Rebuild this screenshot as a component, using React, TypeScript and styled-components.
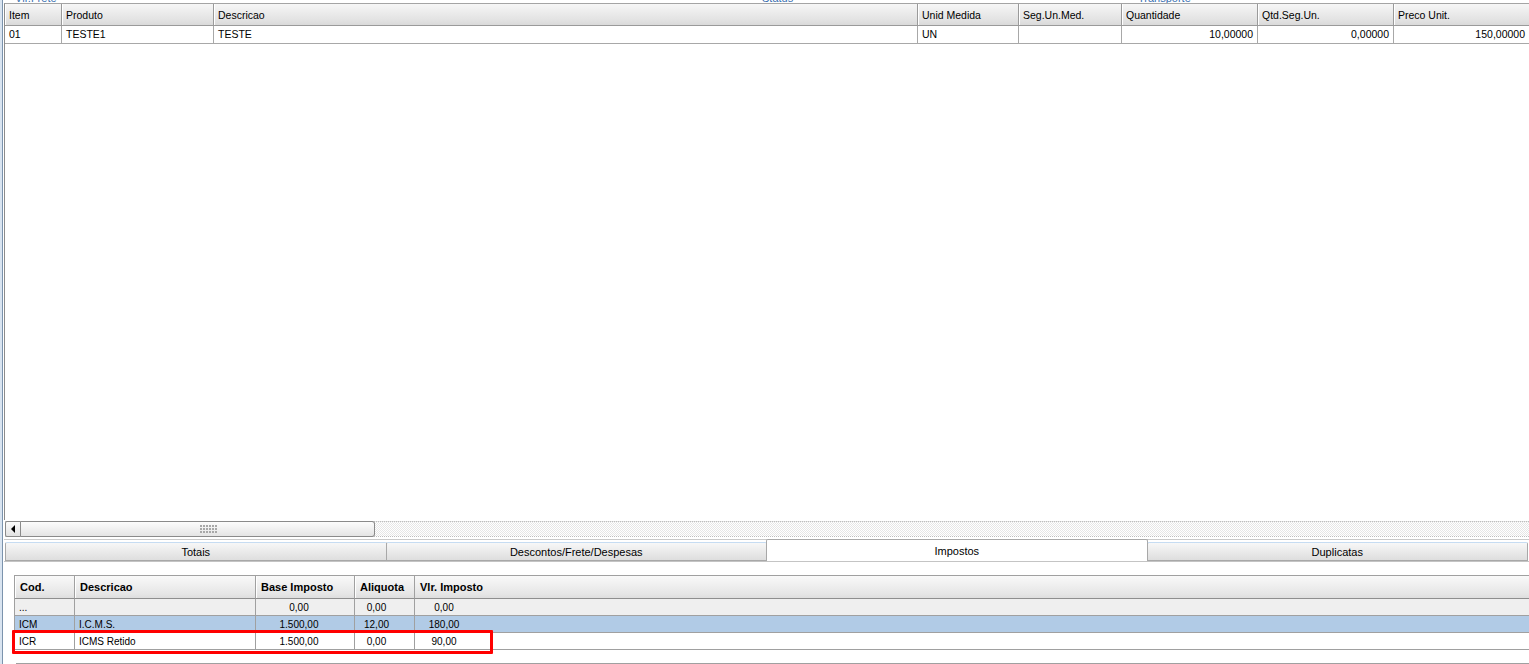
import React from "react";
import styled, { createGlobalStyle } from "styled-components";

const GlobalStyle = createGlobalStyle`
  html, body {
    margin: 0;
    padding: 0;
    background: #fff;
  }
  body {
    width: 1529px;
    height: 664px;
    overflow: hidden;
    font-family: "Liberation Sans", Arial, sans-serif;
    color: #000;
  }
`;

type Col = { title: string; width: number; align?: "left" | "right" };

const itemCols: Col[] = [
  { title: "Item", width: 57 },
  { title: "Produto", width: 152 },
  { title: "Descricao", width: 704 },
  { title: "Unid Medida", width: 101 },
  { title: "Seg.Un.Med.", width: 103 },
  { title: "Quantidade", width: 136, align: "right" },
  { title: "Qtd.Seg.Un.", width: 136, align: "right" },
  { title: "Preco Unit.", width: 136, align: "right" },
];

const itemRows = [["01", "TESTE1", "TESTE", "UN", "", "10,00000", "0,00000", "150,00000"]];

type TaxCol = { title: string; width: string; pad?: number; center?: boolean; divider: boolean };

const taxCols: TaxCol[] = [
  { title: "Cod.", width: "60px", divider: true },
  { title: "Descricao", width: "181px", divider: true },
  { title: "Base Imposto", width: "99px", center: true, pad: 16, divider: true },
  { title: "Aliquota", width: "60px", center: true, pad: 20, divider: true },
  { title: "Vlr. Imposto", width: "86px", center: true, pad: 32, divider: false },
  { title: "", width: "1fr", divider: false },
];

const taxRows = [
  { kind: "empty", cells: ["...", "", "0,00", "0,00", "0,00", ""] },
  { kind: "selected", cells: ["ICM", "I.C.M.S.", "1.500,00", "12,00", "180,00", ""] },
  { kind: "plain", cells: ["ICR", "ICMS Retido", "1.500,00", "0,00", "90,00", ""] },
];

const tabs = ["Totais", "Descontos/Frete/Despesas", "Impostos", "Duplicatas"];

export default function App() {
  const itemTemplate = itemCols.map((c) => `${c.width}px`).join(" ");
  const taxTemplate = taxCols.map((c) => c.width).join(" ");

  return (
    <>
      <GlobalStyle />
      <Frame>
        <Inner>
          <CaptionStrip>
            <Caption>Vlr.Frete</Caption>
            <Caption>Status</Caption>
            <Caption>Transporte</Caption>
          </CaptionStrip>

          <ItemGrid>
            <GridRow $template={itemTemplate}>
              {itemCols.map((c) => (
                <HeadCell key={c.title}>{c.title}</HeadCell>
              ))}
            </GridRow>
            {itemRows.map((r, i) => (
              <GridRow key={i} $template={itemTemplate}>
                {r.map((v, j) => (
                  <ItemCell key={j} $align={itemCols[j].align || "left"}>
                    {v}
                  </ItemCell>
                ))}
              </GridRow>
            ))}
          </ItemGrid>

          <HScroll>
            <ArrowButton>
              <ArrowLeft />
            </ArrowButton>
            <Thumb>
              <Grip />
            </Thumb>
          </HScroll>

          <TabArea>
            <TabStrip>
              {tabs.map((t) => (
                <Tab key={t} $active={t === "Impostos"}>
                  {t}
                </Tab>
              ))}
            </TabStrip>
          </TabArea>

          <TaxPanel>
            <TaxGrid>
              <GridRow $template={taxTemplate}>
                {taxCols.map((c, i) => (
                  <TaxHead key={i} $divider={c.divider}>
                    {c.title}
                  </TaxHead>
                ))}
              </GridRow>
              {taxRows.map((r, i) => (
                <GridRow key={i} $template={taxTemplate}>
                  {r.cells.map((v, j) => (
                    <TaxCell
                      key={j}
                      $kind={r.kind}
                      $center={!!taxCols[j].center}
                      $pad={taxCols[j].pad || 0}
                      $divider={taxCols[j].divider}
                    >
                      {v}
                    </TaxCell>
                  ))}
                </GridRow>
              ))}
              <Highlight />
            </TaxGrid>
            <BottomScrollEdge />
          </TaxPanel>
        </Inner>
      </Frame>
    </>
  );
}

const Frame = styled.div`
  height: 664px;
  border-left: 2px solid #d9e4f0;
  box-sizing: border-box;
`;

const Inner = styled.div`
  height: 100%;
  border-left: 1px solid #7b93ad;
  padding-left: 1px;
  display: flex;
  flex-direction: column;
`;

const CaptionStrip = styled.div`
  height: 3px;
  overflow: hidden;
  display: grid;
  grid-template-columns: 747px 376px 1fr;
  padding-left: 11px;
  font-size: 11px;
  color: #3a6fb0;
`;

const Caption = styled.span`
  display: block;
  line-height: 11px;
  margin-top: -7px;
`;

const ItemGrid = styled.div`
  height: 518px;
  box-sizing: border-box;
  border-top: 1px solid #a4a4a4;
  border-left: 1px solid #8c8c8c;
  background: #fff;
`;

const GridRow = styled.div<{ $template: string }>`
  display: grid;
  grid-template-columns: ${(p) => p.$template};
`;

const HeadCell = styled.div`
  height: 22px;
  box-sizing: border-box;
  padding: 0 4px;
  display: flex;
  align-items: center;
  font-size: 10.5px;
  background: linear-gradient(#f6f6f6, #e4e4e4 70%, #dadada);
  border-right: 1px solid #9a9a9a;
  border-bottom: 1px solid #9a9a9a;
  box-shadow: inset 1px 0 #ffffff;
  white-space: nowrap;
`;

const ItemCell = styled.div<{ $align: "left" | "right" }>`
  height: 18px;
  box-sizing: border-box;
  padding: 0 4px 1px;
  display: flex;
  align-items: center;
  justify-content: ${(p) => (p.$align === "right" ? "flex-end" : "flex-start")};
  font-size: 10.5px;
  border-right: 1px solid #a8a8a8;
  border-bottom: 1px solid #a8a8a8;
  white-space: nowrap;
`;

const HScroll = styled.div`
  display: flex;
  height: 16px;
  margin: 1px 0 0 1px;
  box-sizing: border-box;
  border-top: 1px dotted #bdbdbd;
  border-bottom: 1px dotted #bdbdbd;
  background: repeating-conic-gradient(#e6e6e6 0 25%, #ffffff 0 50%) 0 0 / 2px 2px;
`;

const ArrowButton = styled.div`
  width: 16px;
  margin: -1px 0;
  box-sizing: border-box;
  border: 1px solid #8a8a8a;
  border-radius: 2px 0 0 2px;
  background: linear-gradient(#fbfbfb, #e2e2e2);
  display: flex;
  align-items: center;
  justify-content: center;
`;

const ArrowLeft = styled.span`
  width: 0;
  height: 0;
  border-top: 4px solid transparent;
  border-bottom: 4px solid transparent;
  border-right: 4px solid #000;
`;

const Thumb = styled.div`
  width: 354px;
  margin: -1px 0;
  box-sizing: border-box;
  border: 1px solid #8a8a8a;
  border-left: none;
  border-radius: 0 3px 3px 0;
  background: linear-gradient(#fcfcfc, #e4e4e4);
  display: flex;
  align-items: center;
  justify-content: center;
`;

const Grip = styled.span`
  width: 17px;
  height: 8px;
  margin-left: 22px;
  background: radial-gradient(circle at 1px 1px, #a8a8a8 0.8px, transparent 1px) 0 0 / 3px 3px;
`;

const TabArea = styled.div`
  margin-top: 2px;
  border-top: 1px solid #c9c9c9;
  padding: 2px 1px 0 1px;
  border-bottom: 1px solid #c4c4c4;
`;

const TabStrip = styled.div`
  display: flex;
  align-items: flex-end;
  height: 19px;
`;

const Tab = styled.div<{ $active: boolean }>`
  flex: 1;
  height: ${(p) => (p.$active ? "22px" : "19px")};
  margin-top: ${(p) => (p.$active ? "-3px" : "0")};
  box-sizing: border-box;
  display: flex;
  align-items: center;
  justify-content: center;
  font-size: 11px;
  white-space: nowrap;
  border: 1px solid #a8a8a8;
  border-bottom: ${(p) => (p.$active ? "none" : "1px solid #a8a8a8")};
  border-top-color: ${(p) => (p.$active ? "#a8a8a8" : "#c6dcf2")};
  border-radius: 2px 2px 0 0;
  background: ${(p) => (p.$active ? "#ffffff" : "linear-gradient(#f7f7f7, #dedede)")};
  & + & {
    margin-left: -1px;
  }
`;

const TaxPanel = styled.div`
  flex: 1;
  padding: 13px 0 0 10px;
  display: flex;
  flex-direction: column;
`;

const TaxGrid = styled.div`
  position: relative;
  border-top: 1px solid #a0a0a0;
  border-left: 1px solid #a0a0a0;
`;

const TaxHead = styled.div<{ $divider: boolean }>`
  height: 23px;
  box-sizing: border-box;
  padding: 0 5px;
  display: flex;
  align-items: center;
  font-size: 11px;
  font-weight: bold;
  background: linear-gradient(#f9f9f9, #e6e6e6 80%, #dedede);
  border-right: ${(p) => (p.$divider ? "1px solid #a0a0a0" : "none")};
  border-bottom: 1px solid #8e8e8e;
  box-shadow: ${(p) => (p.$divider ? "inset 1px 0 #ffffff" : "none")};
  white-space: nowrap;
`;

const rowBg: Record<string, string> = {
  empty: "#efefef",
  selected: "#b1cbe6",
  plain: "#ffffff",
};

const TaxCell = styled.div<{ $kind: string; $center: boolean; $pad: number; $divider: boolean }>`
  height: 17px;
  box-sizing: border-box;
  padding: 0 ${(p) => (p.$center ? p.$pad : 4)}px 0 4px;
  display: flex;
  align-items: center;
  justify-content: ${(p) => (p.$center ? "center" : "flex-start")};
  font-size: 10px;
  background: ${(p) => rowBg[p.$kind]};
  border-right: ${(p) => (p.$divider ? "1px solid #a0a0a0" : "none")};
  border-bottom: 1px solid #a0a0a0;
  white-space: nowrap;
`;

const Highlight = styled.div`
  position: absolute;
  left: -3px;
  top: 54px;
  width: 481px;
  height: 24px;
  box-sizing: border-box;
  border: 3px solid #ff0000;
  border-radius: 1px;
  pointer-events: none;
`;

const BottomScrollEdge = styled.div`
  margin: 13px 0 0 2px;
  height: 1px;
  background: #a0a0a0;
`;
